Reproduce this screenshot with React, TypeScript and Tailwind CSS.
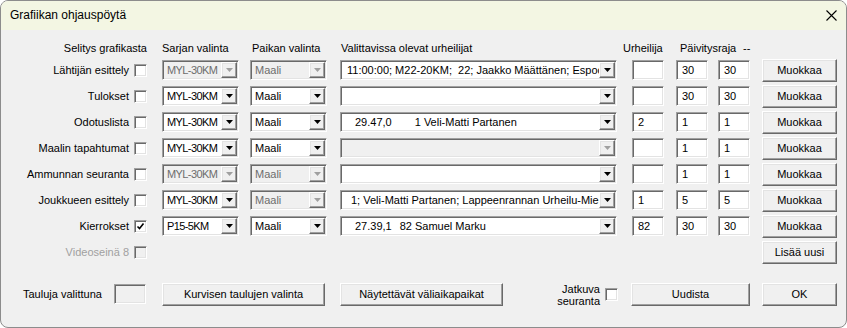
import React from "react";

const sunken =
  "border border-t-[#a0a0a0] border-l-[#a0a0a0] border-r-white border-b-white shadow-[inset_1px_1px_0_#696969,inset_-1px_-1px_0_#e3e3e3]";
const raised =
  "border border-t-white border-l-white border-r-[#696969] border-b-[#696969] shadow-[inset_-1px_-1px_0_#a0a0a0,inset_1px_1px_0_#e3e3e3]";

type Row = {
  label: string;
  checked?: boolean;
  sarja: string;
  sarjaOff?: boolean;
  paikkaOff?: boolean;
  urh: React.ReactNode;
  urhOff?: boolean;
  num: string;
  a: string;
  b: string;
};

const ROWS: Row[] = [
  {
    label: "Lähtijän esittely",
    sarja: "MYL-30KM",
    sarjaOff: true,
    paikkaOff: true,
    urh: <span className="pl-[2px]">11:00:00; M22-20KM;&nbsp; 22; Jaakko Määttänen; Espoon Suunta</span>,
    num: "",
    a: "30",
    b: "30",
  },
  { label: "Tulokset", sarja: "MYL-30KM", urh: "", num: "", a: "30", b: "30" },
  {
    label: "Odotuslista",
    sarja: "MYL-30KM",
    urh: (
      <>
        <span className="pl-[10px]">29.47,0</span>
        <span className="pl-[23px]">1 Veli-Matti Partanen</span>
      </>
    ),
    num: "2",
    a: "1",
    b: "1",
  },
  { label: "Maalin tapahtumat", sarja: "MYL-30KM", urh: "", urhOff: true, num: "", a: "1", b: "1" },
  { label: "Ammunnan seuranta", sarja: "MYL-30KM", sarjaOff: true, paikkaOff: true, urh: "", num: "", a: "1", b: "1" },
  {
    label: "Joukkueen esittely",
    sarja: "MYL-30KM",
    paikkaOff: true,
    urh: <span className="pl-[6px]">1; Veli-Matti Partanen; Lappeenrannan Urheilu-Miehet</span>,
    num: "1",
    a: "5",
    b: "5",
  },
  {
    label: "Kierrokset",
    checked: true,
    sarja: "P15-5KM",
    urh: (
      <>
        <span className="pl-[10px]">27.39,1</span>
        <span className="pl-[8px]">82 Samuel Marku</span>
      </>
    ),
    num: "82",
    a: "30",
    b: "30",
  },
];

function Check({ checked, disabled }: { checked?: boolean; disabled?: boolean }) {
  return (
    <div className={`flex h-[13px] w-[13px] shrink-0 items-center justify-center ${disabled ? "bg-[#f0f0f0]" : "bg-white"} ${sunken}`}>
      {checked && (
        <svg width="9" height="9" viewBox="0 0 9 9">
          <path d="M1.5 4.5 L3.5 6.5 L7.5 1.5" fill="none" stroke="#000" strokeWidth="1.6" />
        </svg>
      )}
    </div>
  );
}

function Combo({ children, disabled, className }: { children?: React.ReactNode; disabled?: boolean; className: string }) {
  return (
    <div className={`flex h-[20px] shrink-0 items-stretch p-px ${disabled ? "bg-[#f0f0f0] text-[#6d6d6d]" : "bg-white text-black"} ${sunken} ${className}`}>
      <div className="flex min-w-0 flex-1 items-center overflow-hidden whitespace-nowrap pl-[3px]">{children}</div>
      <div className={`flex w-[16px] shrink-0 items-center justify-center bg-[#f0f0f0] ${raised}`}>
        <svg width="7" height="4" viewBox="0 0 7 4">
          <path d="M0 0h7L3.5 4z" fill={disabled ? "#a0a0a0" : "#000"} />
        </svg>
      </div>
    </div>
  );
}

function Field({ value, className }: { value: string; className: string }) {
  return (
    <div className={`flex h-[20px] w-[32px] shrink-0 items-center bg-white pl-[5px] ${sunken} ${className}`}>{value}</div>
  );
}

function Button({ children, className }: { children: React.ReactNode; className: string }) {
  return (
    <div className={`flex h-[23px] shrink-0 items-center justify-center bg-[#f0f0f0] ${raised} ${className}`}>{children}</div>
  );
}

export default function App() {
  return (
    <div className="flex h-[328px] w-[847px] flex-col overflow-hidden rounded-[8px] border border-[#8c8c8c] bg-[#f0f0f0] font-['Liberation_Sans',Arial,sans-serif] text-[11px] leading-[13px] text-black">
      {/* Title bar */}
      <div className="flex h-[29px] shrink-0 items-center justify-between bg-[#f3f6e3] pl-[9px] pr-[9px]">
        <span className="text-[12px]">Grafiikan ohjauspöytä</span>
        <svg width="11" height="11" viewBox="0 0 11 11">
          <path d="M0.5 0.5 L10.5 10.5 M10.5 0.5 L0.5 10.5" stroke="#000" strokeWidth="1.1" />
        </svg>
      </div>

      <div className="flex-1 pt-[12px]">
        {/* Column headers */}
        <div className="flex h-[13px] items-center whitespace-nowrap">
          <div className="w-[146px] text-right">Selitys grafikasta</div>
          <div className="ml-[15px] w-[88px]">Sarjan valinta</div>
          <div className="w-[90px] pl-[2px]">Paikan valinta</div>
          <div className="w-[283px] pl-[1px]">Valittavissa olevat urheilijat</div>
          <div className="w-[57px]">Urheilija</div>
          <div className="w-[63px]">Päivitysraja</div>
          <div>--</div>
        </div>

        <div className="mt-[2px]">
          {ROWS.map((r) => (
            <div key={r.label} className="flex h-[26px] items-center whitespace-nowrap">
              <div className="w-[128px] text-right">{r.label}</div>
              <div className="ml-[5px]">
                <Check checked={r.checked} />
              </div>
              <Combo className="ml-[15px] w-[77px]" disabled={r.sarjaOff}>
                <span className="tracking-[-0.6px]">{r.sarja}</span>
              </Combo>
              <Combo className="ml-[11px] w-[77px]" disabled={r.paikkaOff}>
                Maali
              </Combo>
              <Combo className="ml-[13px] w-[277px]" disabled={r.urhOff}>
                {r.urh}
              </Combo>
              <Field className="ml-[15px]" value={r.num} />
              <Field className="ml-[12px]" value={r.a} />
              <Field className="ml-[10px]" value={r.b} />
              <Button className="ml-[12px] w-[75px]">Muokkaa</Button>
            </div>
          ))}
          <div className="flex h-[26px] items-center whitespace-nowrap">
            <div className="w-[128px] text-right text-[#a0a0a0]">Videoseinä 8</div>
            <div className="ml-[5px]">
              <Check disabled />
            </div>
            <div className="flex-1" />
            <Button className="mr-[9px] w-[75px]">Lisää uusi</Button>
          </div>
        </div>

        {/* Bottom row */}
        <div className="mt-[17px] flex h-[24px] items-center whitespace-nowrap">
          <div className="ml-[22px] w-[91px]">Tauluja valittuna</div>
          <div className={`h-[20px] w-[32px] shrink-0 bg-[#f0f0f0] ${sunken}`} />
          <Button className="ml-[16px] w-[163px]">Kurvisen taulujen valinta</Button>
          <Button className="ml-[15px] w-[163px]">Näytettävät väliaikapaikat</Button>
          <div className="mt-[2px] w-[97px] text-right leading-[12px]">
            Jatkuva
            <br />
            seuranta
          </div>
          <div className="ml-[5px]">
            <Check />
          </div>
          <Button className="ml-[13px] w-[119px]">Uudista</Button>
          <Button className="ml-[12px] w-[75px]">OK</Button>
        </div>
      </div>
    </div>
  );
}
